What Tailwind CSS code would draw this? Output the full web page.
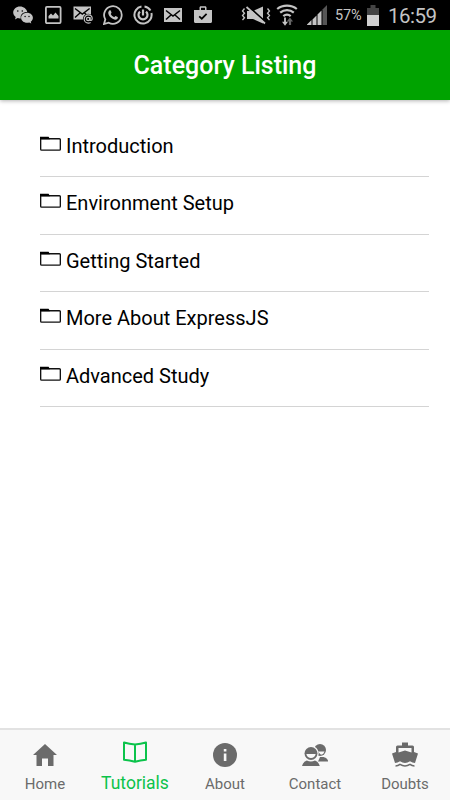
<!DOCTYPE html>
<html lang="en">
<head>
    <meta charset="UTF-8">
    <meta name="viewport" content="width=device-width, initial-scale=1.0">
    <title>Category Listing</title>
    <script src="https://cdn.jsdelivr.net/npm/@tailwindcss/browser@4"></script>
</head>
<body class="bg-white font-[Roboto,sans-serif]">
    <div class="flex flex-col w-[450px] h-[800px] overflow-hidden">
        <!-- Status bar -->
        <div class="flex items-center shrink-0 h-[30px] pl-[13px] bg-black text-[#c4c4c4]">
            <div class="flex gap-[10px]">
                <!-- WeChat -->
                <svg class="w-5 h-5" viewBox="0 0 20 20" fill="currentColor">
                    <path d="M7 1.500C3.200 1.500 .2 4.200 .2 7.500c0 1.800 1 3.400 2.500 4.500L2 14.500l2.600-1.400c1 .3 2 .4 3.200 .3C7 9.700 9.800 7 14.200 7 13.600 3.900 10.700 1.500 7 1.500z"/>
                    <path d="M14 7.800c-3.300 0-5.900 2.200-5.900 5s2.600 5 5.900 5c.8 0 1.500-.1 2.200-.3l2.100 1.100-.6-1.800c1.300-.9 2.200-2.400 2.200-4 0-2.800-2.600-5-5.900-5z"/>
                    <g fill="#000">
                        <circle cx="4.800" cy="6" r=".8"/><circle cx="9.300" cy="6" r=".8"/>
                        <circle cx="12.100" cy="11.500" r=".7"/><circle cx="16" cy="11.500" r=".7"/>
                    </g>
                </svg>
                <!-- Picture -->
                <svg class="w-5 h-5" viewBox="0 0 20 20" fill="none" stroke="currentColor" stroke-width="1.800">
                    <rect x="2.900" y="1.900" width="14.700" height="16.200" rx="1"/>
                    <path d="M5.500 13.500V11l2.500-2.500 2 2 2.500-3L15.500 11v2.500z" fill="currentColor" stroke="none"/>
                </svg>
                <!-- Mail account -->
                <svg class="w-5 h-5" viewBox="0 0 20 20">
                    <path d="M.5 1.500h17.500v13H.5z" fill="currentColor"/>
                    <path d="M2 3.500l7.300 5.500 7.300-5.500M2 12.500l5-4.500M16.500 12.500l-5-4.500" stroke="#000" stroke-width="1.400" fill="none"/>
                    <circle cx="15.200" cy="14" r="5.300" fill="#000"/>
                    <g fill="none" stroke="currentColor" stroke-width="1.200">
                        <circle cx="15.200" cy="14" r="1.700"/>
                        <path d="M17 12v2.700c0 1.200 2.200 1 2.200-.9 0-2.200-1.700-3.900-3.900-3.900-2.300 0-4.100 1.800-4.100 4.100s1.800 4.100 4.100 4.100c.9 0 1.600-.2 2.300-.6"/>
                    </g>
                </svg>
                <!-- WhatsApp -->
                <svg class="w-5 h-5" viewBox="0 0 20 20">
                    <path d="M1 19l1.300-4.600A8.800 8.800 0 1 1 5.700 17.700z" fill="none" stroke="currentColor" stroke-width="1.800"/>
                    <path d="M6.300 5.500c.4-.4 1.100-.4 1.400.1l.8 1.900c.1.400-.6 1.200-.8 1.500.8 1.500 1.900 2.500 3.500 3.200.4-.4 1-1.300 1.300-1.300l2.200 1.100c.3.200.1 1.500-.5 2-1.600 1.400-4.100.4-6.100-1.200C6 11.100 4 7.700 6.300 5.500z" fill="currentColor"/>
                </svg>
                <!-- Sync timer -->
                <svg class="w-5 h-5" viewBox="0 0 20 20" fill="none" stroke="currentColor">
                    <path d="M8.500 1.500a8.600 8.600 0 1 0 9.900 6.500M11.500 1.500a8.600 8.600 0 0 1 6 4" stroke-width="2"/>
                    <path d="M7 6.600a4.500 4.500 0 1 0 6 0M10 4.500v6" stroke-width="2.200"/>
                </svg>
                <!-- Mail -->
                <svg class="w-5 h-5" viewBox="0 0 20 20">
                    <path d="M1 3h18v14H1z" fill="currentColor"/>
                    <path d="M3 5.500l7 5.500 7-5.500M3 14.500l5-4.500M17 14.500l-5-4.500" stroke="#000" stroke-width="1.500" fill="none"/>
                </svg>
                <!-- Play store bag -->
                <svg class="w-5 h-5" viewBox="0 0 20 20">
                    <path d="M1 5h5.500V2.700c0-.8.6-1.400 1.400-1.400h4.200c.8 0 1.400.6 1.400 1.400V5H19v11.500c0 .9-.6 1.500-1.500 1.500h-15C1.600 18 1 17.400 1 16.500zM8 5h4V2.800H8z" fill="currentColor" fill-rule="evenodd"/>
                    <path d="M6.200 11.300l2.600 2.400 4.800-4.800" stroke="#000" stroke-width="1.700" fill="none"/>
                </svg>
            </div>
            <!-- Vibrate / muted -->
            <svg class="w-[30px] h-5 ml-[28px]" viewBox="0 0 30 20">
                <path d="M6 6h6l10-4.500v17L12 14H6z" fill="currentColor"/>
                <path d="M7.500 1.500l17 15.500" stroke="#000" stroke-width="1.800"/>
                <path d="M5.500 2L24 18.500" stroke="currentColor" stroke-width="1.800"/>
                <path d="M3.500 3.500L1.500 6l2 2.200-2 2.300 2 2.200-2 2.300M26.500 3.500l2 2.500-2 2.200 2 2.300-2 2.200 2 2.300" fill="none" stroke="currentColor" stroke-width="1.300"/>
            </svg>
            <!-- Wifi -->
            <svg class="w-[22px] h-[22px] ml-[5px]" viewBox="0 0 22 22" fill="none" stroke="currentColor" stroke-width="2.200">
                <path d="M1.200 5c5.300-4.500 14.300-4.500 19.600 0M4.200 8.700c3.900-3.400 9.700-3.400 13.600 0M7.300 12.200c2.200-1.900 5.200-1.900 7.400 0"/>
                <path d="M9 13.500v5" stroke-width="1.800"/>
                <path d="M6 17.800h6L9 21.800z" fill="currentColor" stroke="none"/>
                <path d="M10.700 17.500l3.200-4 3.200 4h-2V21h-2.200v-3.500z" fill="#666" stroke="none"/>
            </svg>
            <!-- Signal -->
            <svg class="w-[22px] h-[22px] ml-[9px]" viewBox="0 0 22 22" fill="currentColor">
                <path d="M0 20.500L4.500 16v5H0zM5.500 15.500l4-4V21h-4zM10.500 10.500l4-4V21h-4z"/>
                <path d="M15.500 5.500L20 1v20h-4.500z" fill="#555"/>
            </svg>
            <span class="w-[28px] ml-[6px] text-[14.500px] leading-none tracking-[-0.100px] mt-[2px]">57%</span>
            <!-- Battery -->
            <svg class="w-3 h-[21px] ml-[4px]" viewBox="0 0 12 21">
                <path d="M3.500 0h5v3H12v7H0V3h3.500z" fill="#444"/>
                <path d="M0 10h12v11H0z" fill="#d0d0d0"/>
            </svg>
            <span class="ml-[9px] text-[20.500px] leading-none tracking-[-0.500px] mt-[2px]">16:59</span>
        </div>

        <!-- Header -->
        <header class="relative flex items-center justify-center shrink-0 h-[70px] bg-[#00a300] shadow-[0_1px_4px_rgba(0,0,0,0.3)]">
            <h1 class="text-[25px] font-medium text-white leading-none">Category Listing</h1>
        </header>

        <!-- Categories -->
        <ul class="flex-1 pt-[19.500px] pl-[40px] pr-[21px] text-[20px] text-black">
            <li class="flex items-center h-[57.500px] pb-[4px] border-b border-[#d4d4d4]">
                <svg class="w-[21px] h-[16px] mr-[5px] mb-[4px]" viewBox="0 0 22 16" fill="none" stroke="#111" stroke-width="1.400">
                    <path d="M.7 2v11.500q0 1 1 1h18.600q1 0 1-1v-10q0-1-1-1H.7"/>
                    <path d="M0 .5H9L10.500 3H0z" fill="#000" stroke="none"/>
                </svg>
                <span>Introduction</span>
            </li>
            <li class="flex items-center h-[57.500px] pb-[4px] border-b border-[#d4d4d4]">
                <svg class="w-[21px] h-[16px] mr-[5px] mb-[4px]" viewBox="0 0 22 16" fill="none" stroke="#111" stroke-width="1.400">
                    <path d="M.7 2v11.500q0 1 1 1h18.600q1 0 1-1v-10q0-1-1-1H.7"/>
                    <path d="M0 .5H9L10.500 3H0z" fill="#000" stroke="none"/>
                </svg>
                <span>Environment Setup</span>
            </li>
            <li class="flex items-center h-[57.500px] pb-[4px] border-b border-[#d4d4d4]">
                <svg class="w-[21px] h-[16px] mr-[5px] mb-[4px]" viewBox="0 0 22 16" fill="none" stroke="#111" stroke-width="1.400">
                    <path d="M.7 2v11.500q0 1 1 1h18.600q1 0 1-1v-10q0-1-1-1H.7"/>
                    <path d="M0 .5H9L10.500 3H0z" fill="#000" stroke="none"/>
                </svg>
                <span>Getting Started</span>
            </li>
            <li class="flex items-center h-[57.500px] pb-[4px] border-b border-[#d4d4d4]">
                <svg class="w-[21px] h-[16px] mr-[5px] mb-[4px]" viewBox="0 0 22 16" fill="none" stroke="#111" stroke-width="1.400">
                    <path d="M.7 2v11.500q0 1 1 1h18.600q1 0 1-1v-10q0-1-1-1H.7"/>
                    <path d="M0 .5H9L10.500 3H0z" fill="#000" stroke="none"/>
                </svg>
                <span>More About ExpressJS</span>
            </li>
            <li class="flex items-center h-[57.500px] pb-[4px] border-b border-[#d4d4d4]">
                <svg class="w-[21px] h-[16px] mr-[5px] mb-[4px]" viewBox="0 0 22 16" fill="none" stroke="#111" stroke-width="1.400">
                    <path d="M.7 2v11.500q0 1 1 1h18.600q1 0 1-1v-10q0-1-1-1H.7"/>
                    <path d="M0 .5H9L10.500 3H0z" fill="#000" stroke="none"/>
                </svg>
                <span>Advanced Study</span>
            </li>
        </ul>

        <!-- Tab bar -->
        <nav class="grid grid-cols-5 shrink-0 h-[72px] border-t-2 border-[#e2e2e2] bg-[#f8f8f8] text-[#6b6b6b] text-[15px] leading-5">
            <a class="flex flex-col items-center pt-[12px]">
                <svg class="w-[26px] h-[26px]" viewBox="0 0 26 26" fill="currentColor">
                    <path d="M13 2L1 13h3.500v11H10v-7.500h6V24h5.500V13H25z"/>
                </svg>
                <span class="mt-[6px]">Home</span>
            </a>
            <a class="flex flex-col items-center pt-[9px] text-[#0bc34b] text-[17.500px]">
                <svg class="w-[26px] h-[26px]" viewBox="0 0 26 26" fill="none" stroke="currentColor" stroke-width="2" stroke-linejoin="round">
                    <path d="M13 5.500Q7.500 5 2 3.500v17.300q5.500.4 11 2 5.500-1.600 11-2V3.500Q18.500 5 13 5.500zM13 5.500v17"/>
                </svg>
                <span class="mt-[8px]">Tutorials</span>
            </a>
            <a class="flex flex-col items-center pt-[12px]">
                <svg class="w-[26px] h-[26px]" viewBox="0 0 26 26">
                    <circle cx="13" cy="13" r="12" fill="currentColor"/>
                    <path d="M11.800 7h2.600v2.500h-2.600zM11.800 11.500h2.600V19h-2.600z" fill="#f8f8f8"/>
                </svg>
                <span class="mt-[6px]">About</span>
            </a>
            <a class="flex flex-col items-center pt-[12px]">
                <svg class="w-[26px] h-[26px]" viewBox="0 0 26 26" fill="currentColor">
                    <circle cx="18" cy="8" r="6"/>
                    <path d="M15.500 9.500h7q-.8 3-3.500 3.200z" fill="#f8f8f8"/>
                    <path d="M16 19.500l2-4.500h3.500q3.500.3 5 4.500z"/>
                    <circle cx="9" cy="11.500" r="7.700" fill="#f8f8f8"/>
                    <circle cx="9" cy="11.500" r="6.500"/>
                    <path d="M4.300 12h9.400q-1 4-4.700 4t-4.700-4z" fill="#f8f8f8"/>
                    <path d="M0 24q1.200-4.300 4.800-5.500Q9 20.500 13 18.500q3.500 1.200 4.800 5.500z"/>
                </svg>
                <span class="mt-[6px]">Contact</span>
            </a>
            <a class="flex flex-col items-center pt-[12px]">
                <svg class="w-[26px] h-[26px]" viewBox="0 0 26 26" fill="currentColor">
                    <path d="M10 .5h6v3h4.500q1.500 0 1.500 1.500V10l4 1.500L23 21q-2.500 0-5-1.800-5 3.500-10 0Q5.500 21 3 21L0 11.500 4 10V5Q4 3.500 5.500 3.500H10zM6.500 6V10.500L13 8.500l6.500 2V6z" fill-rule="evenodd"/>
                    <path d="M3.500 24q2.500 0 4.500-1.600 5 3.200 10 0 2 1.600 4.500 1.600" fill="none" stroke="currentColor" stroke-width="1.600"/>
                </svg>
                <span class="mt-[6px]">Doubts</span>
            </a>
        </nav>
    </div>
</body>
</html>
